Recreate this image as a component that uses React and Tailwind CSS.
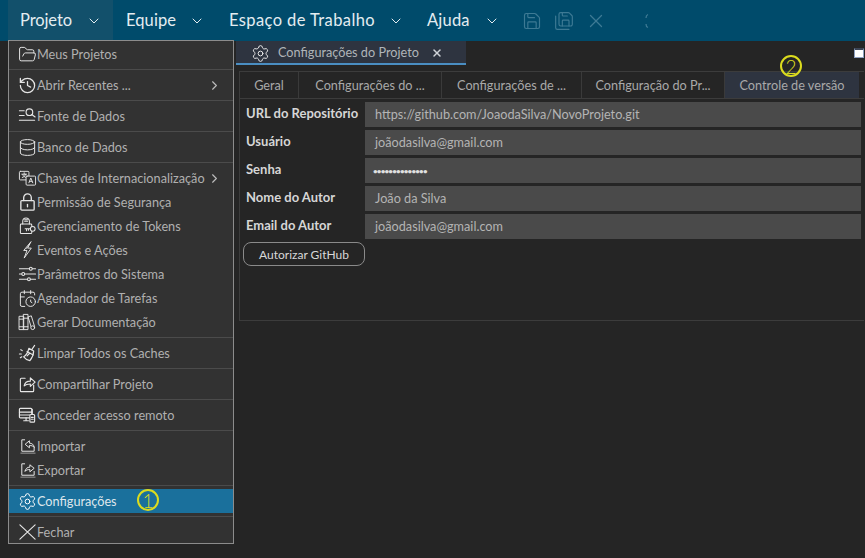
import React from "react";
import { ChevronDown, ChevronRight, FolderOpen, History, Database, CalendarClock, Settings, X, Save, SaveAll } from "lucide-react";

const G = ({ children, sw = 1.15 }) => (
  <svg width="20" height="20" viewBox="0 0 20 20" fill="none" stroke="currentColor" strokeWidth={sw} strokeLinecap="round" strokeLinejoin="round">{children}</svg>
);
const Share = () => (
  <G sw={1.2}>
    <path d="M7.500 4H3.500a1 1 0 0 0-1 1v12a1 1 0 0 0 1 1h12a1 1 0 0 0 1-1v-6" />
    <path d="M6.500 12c.5-3 3-5 6.500-5V3.500l5 4.500-5 4.500V10c-3 0-5 .5-6.500 2z" />
  </G>
);
const Imp = ({ flip }) => (
  <G sw={1.05}>
    <path d="M7 3.500H4v12h13v-4" />
    <path d="M3 17.500h15" opacity=".6" />
    {flip ? (
      <path d="M7.500 11c.4-2.500 2.300-4 5-4V4.500l4.500 3.700-4.500 3.700V9.500c-2.200 0-3.700.4-5 1.500z" />
    ) : (
      <path d="M17 11c-.4-2.500-2.300-4-5-4V4.500L7.500 8.200l4.500 3.700V9.500c2.200 0 3.700.4 5 1.500z" />
    )}
  </G>
);
const Remote = () => (
  <G sw={1.2}>
    <rect x="1.500" y="3" width="13" height="10" rx="1" />
    <path d="M1.500 7h13M1.500 10h13M6 16h5M8.500 13v3" />
    <rect x="12.500" y="9.500" width="5" height="8" rx="1" fill="#323232" />
    <path d="M14 12.500h2M14 14.500h2M15 4v5.500" />
  </G>
);
const SearchList = () => (
  <G sw={1.2}>
    <path d="M1.500 4.500h5M1.500 9.500h5M1.500 14.500h16" />
    <circle cx="12" cy="6" r="3.500" />
    <path d="M14.500 8.500l3.500 2.500" />
  </G>
);
const Translate = () => (
  <G sw={1}>
    <rect x="1.500" y="3" width="10" height="9" rx="1" />
    <path d="M4 6h5M6.500 4.500V6M8 6c-.5 2-2 3-3.500 3.500M5 6.500c.5 1.500 1.800 2.500 3.500 3" />
    <rect x="8.500" y="8" width="10" height="9.500" rx="1" fill="#323232" />
    <path d="M11.500 15l2-5 2 5M12.200 13.500h2.600" />
  </G>
);
const LockI = () => (
  <G sw={1.4}>
    <rect x="3" y="8.500" width="14" height="10" rx="1" />
    <path d="M6 8.500V5.500a4 4 0 0 1 8 0v3" />
    <path d="M10 12.500v2.500" />
  </G>
);
const TokenI = () => (
  <G sw={1.1}>
    <rect x="2.500" y="8" width="12" height="10" rx="1" />
    <path d="M5 8V5a3.500 3.500 0 0 1 7 0v3M7 5h3M7 3.500h3" />
    <circle cx="15.500" cy="13" r="2.500" fill="#323232" />
    <path d="M13 13H7.500M9 13v2M11 13v1.500" />
  </G>
);
const Bolt = () => (
  <G sw={1}>
    <path d="M13.500 1.500L6 10.500h3.500L6.500 18.500 14 8h-3.500z" />
    <path d="M12 4L8.500 9" opacity=".6" />
  </G>
);
const Sliders = () => (
  <G sw={1.1}>
    <path d="M1.500 4.500h10.500M15 4.500h3.500M1.500 10h2.500M7 10h11.500M1.500 15.500h8.500M13 15.500h5.500" />
    <circle cx="13.500" cy="4.500" r="1.500" />
    <circle cx="5.500" cy="10" r="1.500" />
    <circle cx="11.500" cy="15.500" r="1.500" />
  </G>
);
const Books = () => (
  <G sw={1}>
    <rect x="1.500" y="4" width="4.500" height="14" />
    <rect x="6" y="2" width="4.500" height="16" />
    <path d="M1.500 7h4.500M1.500 15h4.500M6 6h4.500M6 15h4.500" />
    <path d="M11 4.500l3-1 3.500 11.500-3 1z" />
    <circle cx="15.500" cy="16" r="2" fill="#323232" />
  </G>
);
const Broom = () => (
  <G sw={1.2}>
    <path d="M17.500 2l-3 4.500" />
    <path d="M11.500 5l5 3c-.2 4-1.500 7-4 10-2.500-.5-5-2-6.500-4 2.500-1.500 4.500-5 5.500-9z" />
    <path d="M9.500 8.500l6.500 3.500M9.500 13l2.500-2.500" />
    <path d="M3 6.500l1.500 1M1.500 11h2M2.500 15l1.500-1" />
  </G>
);
const Close = () => (
  <G sw={1.2}>
    <path d="M2 2.500l16 15M18 2.500L2 17.500" />
  </G>
);
const ic = { size: 19, strokeWidth: 1.25 };

const Item = ({ icon, label, sub, active }) => (
  <div className={`flex items-center h-6 pl-[9px] pr-[14px] ${active ? "bg-[#1a709c] text-[#dfe7ec]" : "text-[#b0b0b0]"}`}>
    <span className={`w-[19px] h-[20px] flex items-center justify-center shrink-0 ${active ? "text-white" : "text-[#e6e6e6]"}`}>{icon}</span>
    <span className="whitespace-nowrap pt-px">{label}</span>
    {sub && <ChevronRight size={15} className="ml-auto text-[#bdbdbd] -mr-[3px]" strokeWidth={1.8} />}
  </div>
);
const Sep = () => <div className="h-px my-[3px] bg-[#4b4b4b]" />;

const Nav = ({ label, box, active, track }) => (
  <div className={`h-full flex items-center justify-between pl-3 pr-[11px] shrink-0 ${box} ${active ? "bg-[#12506b]" : ""}`}>
    <span className={`text-[16.500px] text-[#e4edf1] whitespace-nowrap ${track}`}>{label}</span>
    <ChevronDown size={16} className="text-[#e4edf1]" strokeWidth={1.5} />
  </div>
);

const Field = ({ label, value }) => (
  <>
    <div className="text-[13px] font-bold text-[#d6d6d6] pl-[3px] h-[25px] pb-[2px] flex items-center whitespace-nowrap">{label}</div>
    <div className="h-[25px] bg-[#4a4a4a] text-[#b4b4b4] flex items-center pl-[10px] pt-px">{value}</div>
  </>
);

const Tab = ({ w, label, active }) => (
  <div className={`${w} shrink-0 h-full flex items-center justify-center pt-px whitespace-nowrap ${active ? "bg-[#2e3440]" : "border-r border-[#3a3a3a]"} text-[#a9a9a9]`}>{label}</div>
);

const Mark = ({ n, className }) => (
  <div className={`absolute w-[22px] h-[22px] rounded-full border-2 border-[#dcdc1e] text-[#dcdc1e] flex items-center justify-center text-[19px] font-light leading-none ${className}`}>{n}</div>
);

export default function App() {
  return (
    <div className="relative w-[865px] h-[558px] overflow-hidden bg-[#252525] text-[12.700px] font-['Lato',sans-serif]">
      <header className="h-[41px] bg-[#004b6b] flex items-center pl-2">
        <Nav label="Projeto" box="w-[105px]" track="tracking-[-0.1px]" active />
        <Nav label="Equipe" box="w-[102px] ml-px" track="tracking-[0.1px]" />
        <Nav label="Espaço de Trabalho" box="w-[198px] ml-px" track="tracking-[0.4px]" />
        <Nav label="Ajuda" box="w-[96px]" track="tracking-[0.2px]" />
        <div className="flex items-center gap-[12px] ml-[11px] text-[#3d7a94]">
          <Save size={20} strokeWidth={1.4} />
          <SaveAll size={20} strokeWidth={1.4} />
          <X size={22} strokeWidth={1.4} className="-ml-px" />
          <svg width="6" height="16" viewBox="0 0 6 16" fill="none" stroke="currentColor" strokeWidth="1.300" className="ml-[25px]">
            <path d="M4 1.500C2.500 2 2 3.500 2 5M2 11c0 1.500.5 3 2 3.500" />
          </svg>
        </div>
      </header>

      <main className="pl-[236px]">
        <div className="relative h-[24px] flex items-start">
          <div className="w-[230px] h-[24px] bg-[#2e3440] border-b-2 border-[#4a8ec2] flex items-center pl-[15px] pt-[2px] text-[#b0b4b8]">
            <Settings size={19} strokeWidth={1.25} className="text-[#e6e6e6]" />
            <span className="ml-[8px]">Configurações do Projeto</span>
            <X size={12} strokeWidth={3} className="ml-[12px] text-[#cfd3d8]" />
          </div>
          <div className="ml-auto mt-[7px] mr-px w-[10px] h-[10px] bg-white border border-[#8fa0c0] border-t-[2px] border-t-[#3b4454]" />
        </div>
        <section className="ml-[3px] mr-px mt-[6px] h-[250px] border border-[#3c3c3c] border-r-0 pr-[3px]">
          <div className="flex h-[27px] border-b border-[#3c3c3c] -mr-[3px]">
            <Tab w="w-[59px]" label="Geral" />
            <Tab w="w-[143px]" label="Configurações do ..." />
            <Tab w="w-[140px]" label="Configurações de ..." />
            <Tab w="w-[143px]" label="Configuração do Pr..." />
            <Tab w="w-[134px]" label="Controle de versão" active />
          </div>
          <div className="pl-[3px] pt-[3px]">
            <div className="grid grid-cols-[122px_1fr] gap-y-[3px]">
              <Field label="URL do Repositório" value="https://github.com/JoaodaSilva/NovoProjeto.git" />
              <Field label="Usuário" value="joãodasilva@gmail.com" />
              <Field label="Senha" value={<span className="-ml-[2px] text-[#e0e0e0] text-[8px] font-bold tracking-[-0.8px]">••••••••••••••</span>} />
              <Field label="Nome do Autor" value="João da Silva" />
              <Field label="Email do Autor" value="joãodasilva@gmail.com" />
            </div>
            <div className="mt-[3px] w-[122px] h-[24px] pt-px rounded-[8px] border border-[#8a8a8a] text-[12px] text-[#d8d8d8] flex items-center justify-center">Autorizar GitHub</div>
          </div>
        </section>
      </main>

      <nav className="absolute left-2 top-[40px] w-[226px] h-[504px] overflow-hidden bg-[#323232] border border-[#8c8c8c] pt-px">
        <Item icon={<FolderOpen {...ic} />} label="Meus Projetos" />
        <Sep />
        <Item icon={<History {...ic} strokeWidth={1.6} />} label="Abrir Recentes ..." sub />
        <Sep />
        <Item icon={<SearchList />} label="Fonte de Dados" />
        <Sep />
        <Item icon={<Database {...ic} />} label="Banco de Dados" />
        <Sep />
        <Item icon={<Translate />} label="Chaves de Internacionalização" sub />
        <Item icon={<LockI />} label="Permissão de Segurança" />
        <Item icon={<TokenI />} label="Gerenciamento de Tokens" />
        <Item icon={<Bolt />} label="Eventos e Ações" />
        <Item icon={<Sliders />} label="Parâmetros do Sistema" />
        <Item icon={<CalendarClock {...ic} />} label="Agendador de Tarefas" />
        <Item icon={<Books />} label="Gerar Documentação" />
        <Sep />
        <Item icon={<Broom />} label="Limpar Todos os Caches" />
        <Sep />
        <Item icon={<Share />} label="Compartilhar Projeto" />
        <Sep />
        <Item icon={<Remote />} label="Conceder acesso remoto" />
        <Sep />
        <Item icon={<Imp />} label="Importar" />
        <Item icon={<Imp flip />} label="Exportar" />
        <Sep />
        <Item icon={<Settings {...ic} />} label="Configurações" active />
        <Sep />
        <Item icon={<Close />} label="Fechar" />
      </nav>

      <Mark n="1" className="left-[137px] top-[489px]" />
      <Mark n="2" className="left-[780px] top-[55px]" />
    </div>
  );
}
